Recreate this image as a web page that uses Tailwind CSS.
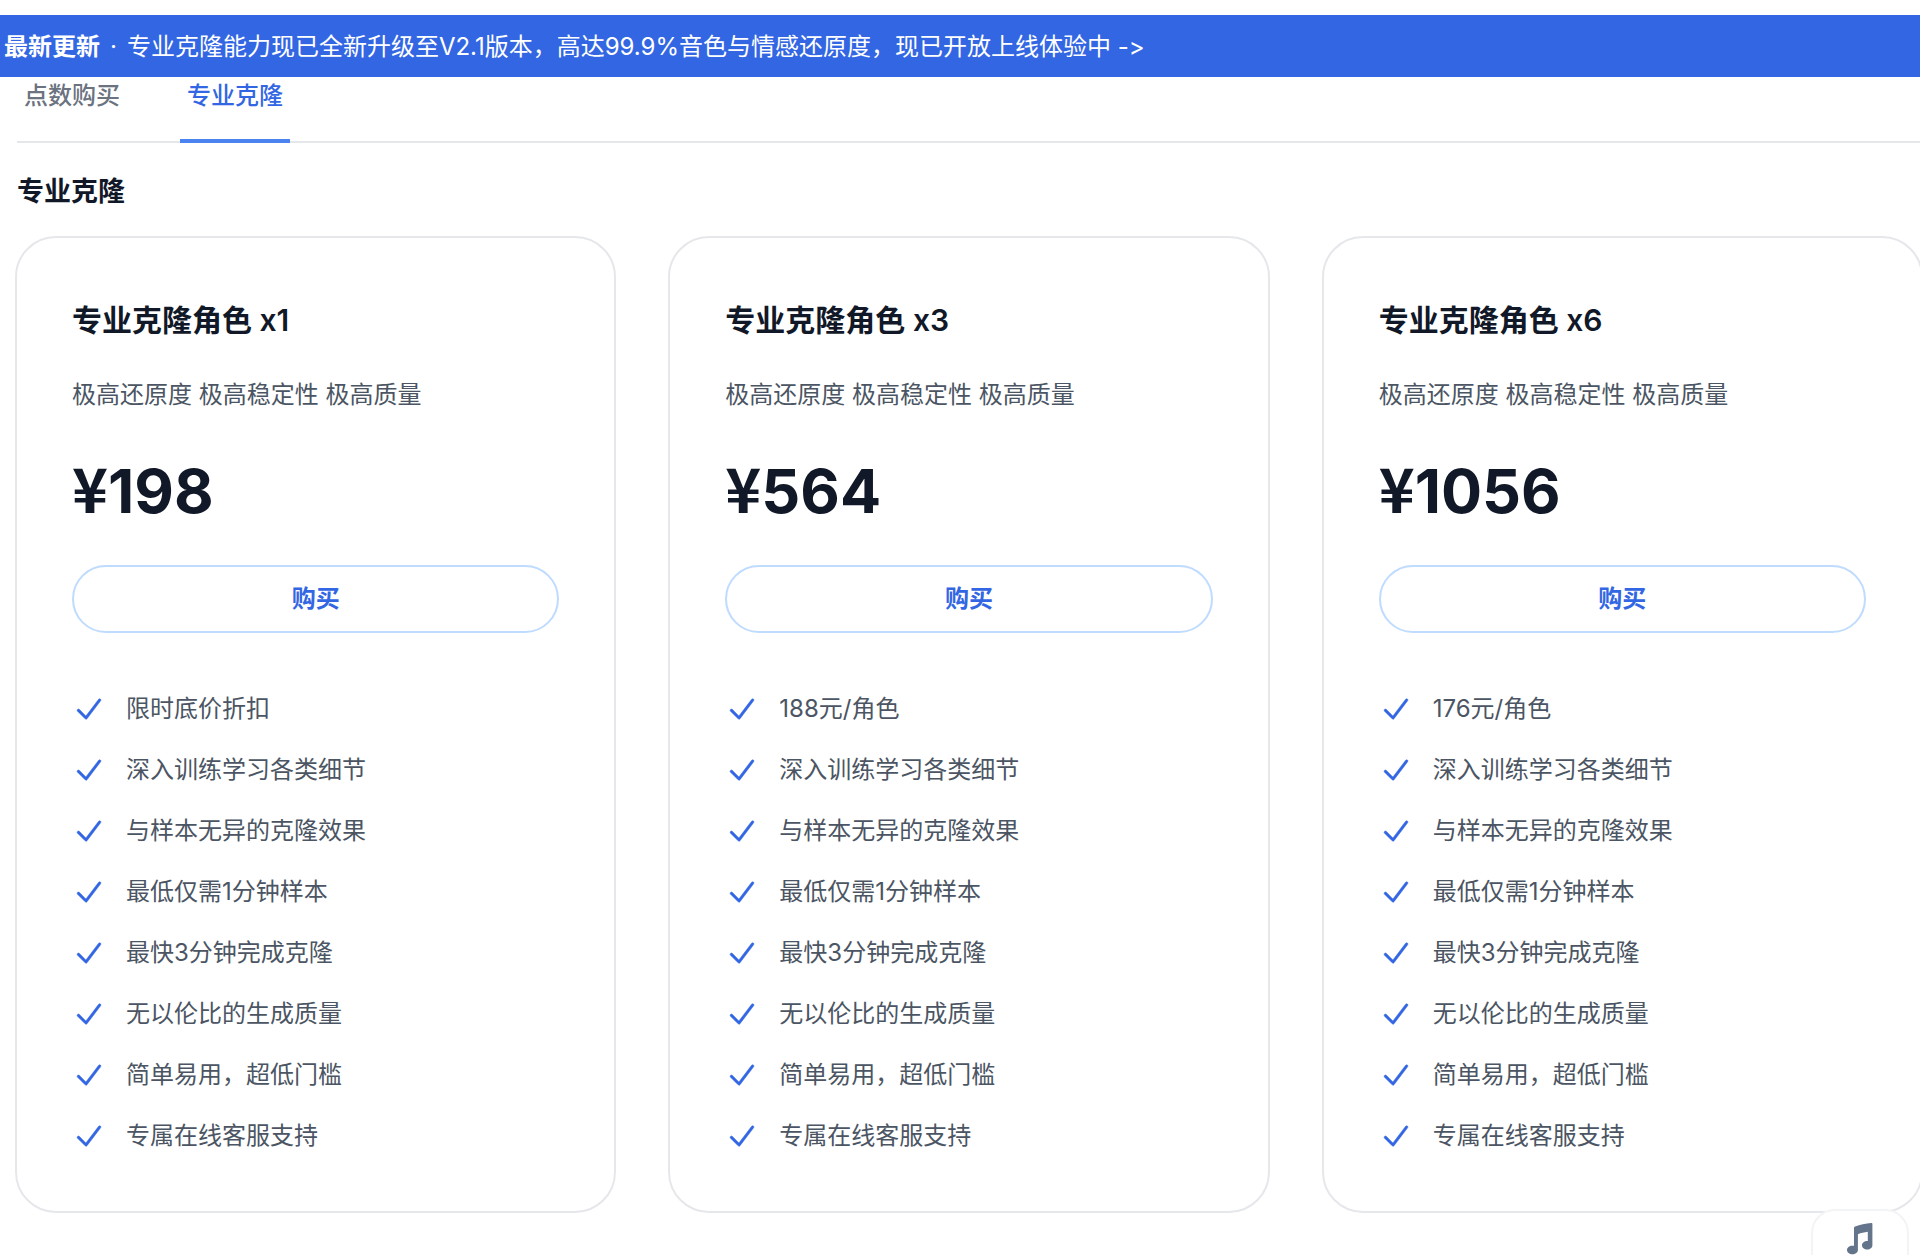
<!DOCTYPE html>
<html lang="zh-CN">

<head>
    <meta charset="UTF-8">
    <meta name="viewport" content="width=device-width, initial-scale=1.0">
    <title>专业克隆</title>
    <script src="https://cdn.jsdelivr.net/npm/@tailwindcss/browser@4"></script>
</head>

<body class="min-h-screen overflow-x-hidden bg-white pt-[15px] font-['Inter','Noto_Sans_CJK_SC',sans-serif] text-2xl text-[#4b5563]">
    <!-- Announcement -->
    <header class="flex h-[62px] items-center bg-[#3366e3] px-1 text-white">
        <a href="#" class="whitespace-nowrap pt-px leading-8 [font-variant-ligatures:none]"><strong class="font-semibold">最新更新</strong><span class="mx-[10px]">·</span>专业克隆能力现已全新升级至V2.1版本，高达99.9%音色与情感还原度，现已开放上线体验中 -&gt;</a>
    </header>

    <main class="pl-[15px]">
        <!-- Tabs -->
        <nav class="ml-[2px] flex gap-[53px] border-b-2 border-[#e5e7eb] font-medium">
            <a href="#" class="-mb-[2px] border-b-4 border-transparent px-[7px] pb-6 leading-[38px] text-[#6b7280]">点数购买</a>
            <a href="#" class="-mb-[2px] border-b-4 border-[#4b83f0] px-[7px] pb-6 leading-[38px] text-[#3366e3]">专业克隆</a>
        </nav>

        <h1 class="mt-[29px] ml-[2px] text-[27px] leading-10 font-semibold text-[#111827]">专业克隆</h1>

        <!-- Plans -->
        <div id="plans" class="-mr-[3px] mt-6 grid grid-cols-3 gap-[52px]"></div>
    </main>

    <!-- Music button -->
    <button type="button" aria-label="音乐" class="fixed right-[11px] -bottom-[50px] flex h-24 w-[98px] justify-center rounded-[24px] border-2 border-[#f3f4f6] bg-white pt-[11px] text-[#64748b]">
        <svg class="h-[34px] w-[28px]" viewBox="0 0 28 34" fill="currentColor">
            <path d="M8 6c0-.7.400-1.100 1.100-1.400C14 2.700 19.500 1.400 25.300 1c.7 0 1.100.4 1.100 1v21.300c0 2.500-2.300 4.300-5.200 4.300s-5.200-1.900-5.200-4.300 2.300-4.300 5.200-4.300h.6V9.800c-3.600.4-6.800 1.200-9.900 2.500V28c0 2.500-2.600 4.300-5.500 4.300S1 30.400 1 28s2.300-4.300 5.200-4.300H8z" />
        </svg>
    </button>

    <!-- JavaScript -->
    <script>
        const plans = [
            { name: "专业克隆角色 x1", price: "198", note: "限时底价折扣" },
            { name: "专业克隆角色 x3", price: "564", note: "188元/角色" },
            { name: "专业克隆角色 x6", price: "1056", note: "176元/角色" }
        ];
        const features = [
            "深入训练学习各类细节",
            "与样本无异的克隆效果",
            "最低仅需1分钟样本",
            "最快3分钟完成克隆",
            "无以伦比的生成质量",
            "简单易用，超低门槛",
            "专属在线客服支持"
        ];

        const featureRow = (text) => `
            <li class="flex items-center gap-5">
                <svg class="size-[34px] flex-none text-[#3366e3]" viewBox="0 0 20 20" fill="currentColor" stroke="currentColor" stroke-width=".3" aria-hidden="true">
                    <path fill-rule="evenodd" clip-rule="evenodd" d="M16.704 4.153a.75.75 0 01.143 1.052l-8 10.500a.75.75 0 01-1.127.075l-4.500-4.500a.75.75 0 011.060-1.060l3.894 3.893 7.480-9.817a.75.75 0 011.050-.143z" />
                </svg>
                ${text}
            </li>`;

        document.getElementById("plans").innerHTML = plans.map((plan) => `
            <section class="rounded-[41px] border-2 border-[#e5e7eb] p-[55px]">
                <h2 class="mt-[5px] text-3xl leading-[44px] font-semibold text-[#111827]">${plan.name}</h2>
                <p class="mt-[33px] leading-10">极高还原度 极高稳定性 极高质量</p>
                <p class="mt-[38px] h-[68px] text-[61px] leading-[68px] font-bold text-[#111827]"><span class="font-['Noto_Sans_CJK_SC',sans-serif]">¥</span>${plan.price}</p>
                <button type="button" class="mt-11 h-[68px] w-full rounded-full border-2 border-[#bfdbfe] font-semibold text-[#3366e3]">购买</button>
                <ul class="mt-[55px] space-y-5 leading-[41px]">${[plan.note, ...features].map(featureRow).join("")}</ul>
            </section>`).join("");
    </script>
</body>

</html>
